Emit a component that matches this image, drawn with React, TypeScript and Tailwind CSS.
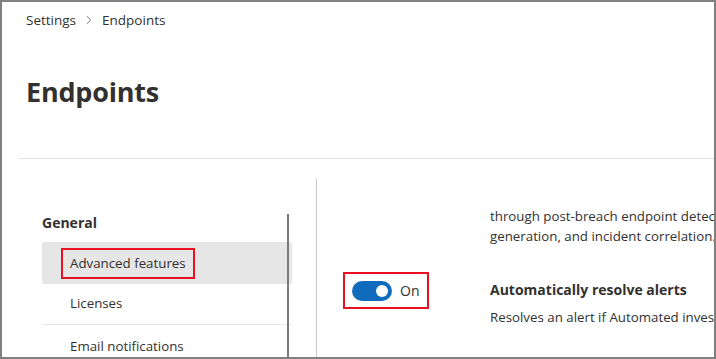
import { ChevronRight } from "lucide-react";

const font = { fontFamily: '"Open Sans", "Noto Sans", sans-serif' };

function Toggle() {
  return (
    <div className="flex h-[37px] w-[86px] items-center border-2 border-[#e81123] pl-[7px]">
      <div className="flex h-[20px] w-[40px] items-center justify-end rounded-full bg-[#0f6cbd] pr-[4px]">
        <div className="size-[12px] rounded-full bg-white" />
      </div>
      <span className="ml-[8px] text-[14px] text-[#323130]">On</span>
    </div>
  );
}

export default function App() {
  return (
    <div
      className="relative h-[359px] w-[716px] overflow-hidden border-2 border-[#808080] bg-white text-[#323130]"
      style={font}
    >
      {/* breadcrumb */}
      <div className="flex h-[20px] items-center pl-[24px] pt-[15px] text-[13.5px] leading-[20px]">
        <span>Settings</span>
        <ChevronRight className="mx-[6px] size-[14px] text-[#605e5c]" strokeWidth={1.5} />
        <span>Endpoints</span>
      </div>

      <h1 className="mt-[52px] pl-[24px] text-[27px] font-bold leading-[36px] tracking-[-0.2px]">Endpoints</h1>

      <div className="ml-[16px] mt-[48px] h-px bg-[#e1e1e1]" />

      <div className="flex text-[13.3px]">
        {/* nav */}
        <div className="relative w-[314px] shrink-0 pl-[40px] pt-[54px]">
          <div className="text-[14px] font-bold leading-[20px]">General</div>
          <div className="mt-[9px] w-[250px]">
            <div className="flex h-[42px] items-center rounded-[2px] bg-[#e6e6e6] pl-[19px]">
              <span className="border-2 border-[#e81123] px-[7px] leading-[27px]">Advanced features</span>
            </div>
            <div className="flex h-[41px] items-center border-b border-[#e8e8e8] pl-[28px]">Licenses</div>
            <div className="flex h-[43px] items-center pl-[28px]">Email notifications</div>
          </div>
          <div className="absolute left-[285px] top-[55px] h-[200px] w-[2px] bg-[#7a7a7a]" />
        </div>

        {/* content */}
        <div className="mt-[20px] flex-1 border-l border-[#c8c8c8] pt-[27px] leading-[20px]">
          <div className="flex">
            <div className="w-[173px] shrink-0" />
            <div className="whitespace-nowrap">
              <div>through post-breach endpoint detection, automated investigation</div>
              <div>generation, and incident correlation.</div>
            </div>
          </div>
          <div className="mt-[26px] flex">
            <div className="w-[173px] shrink-0 pl-[26px]">
              <Toggle />
            </div>
            <div className="whitespace-nowrap pt-[8px]">
              <div className="text-[14px] font-bold">Automatically resolve alerts</div>
              <div className="mt-[7px]">Resolves an alert if Automated investigation finds no threats</div>
            </div>
          </div>
        </div>
      </div>
    </div>
  );
}
